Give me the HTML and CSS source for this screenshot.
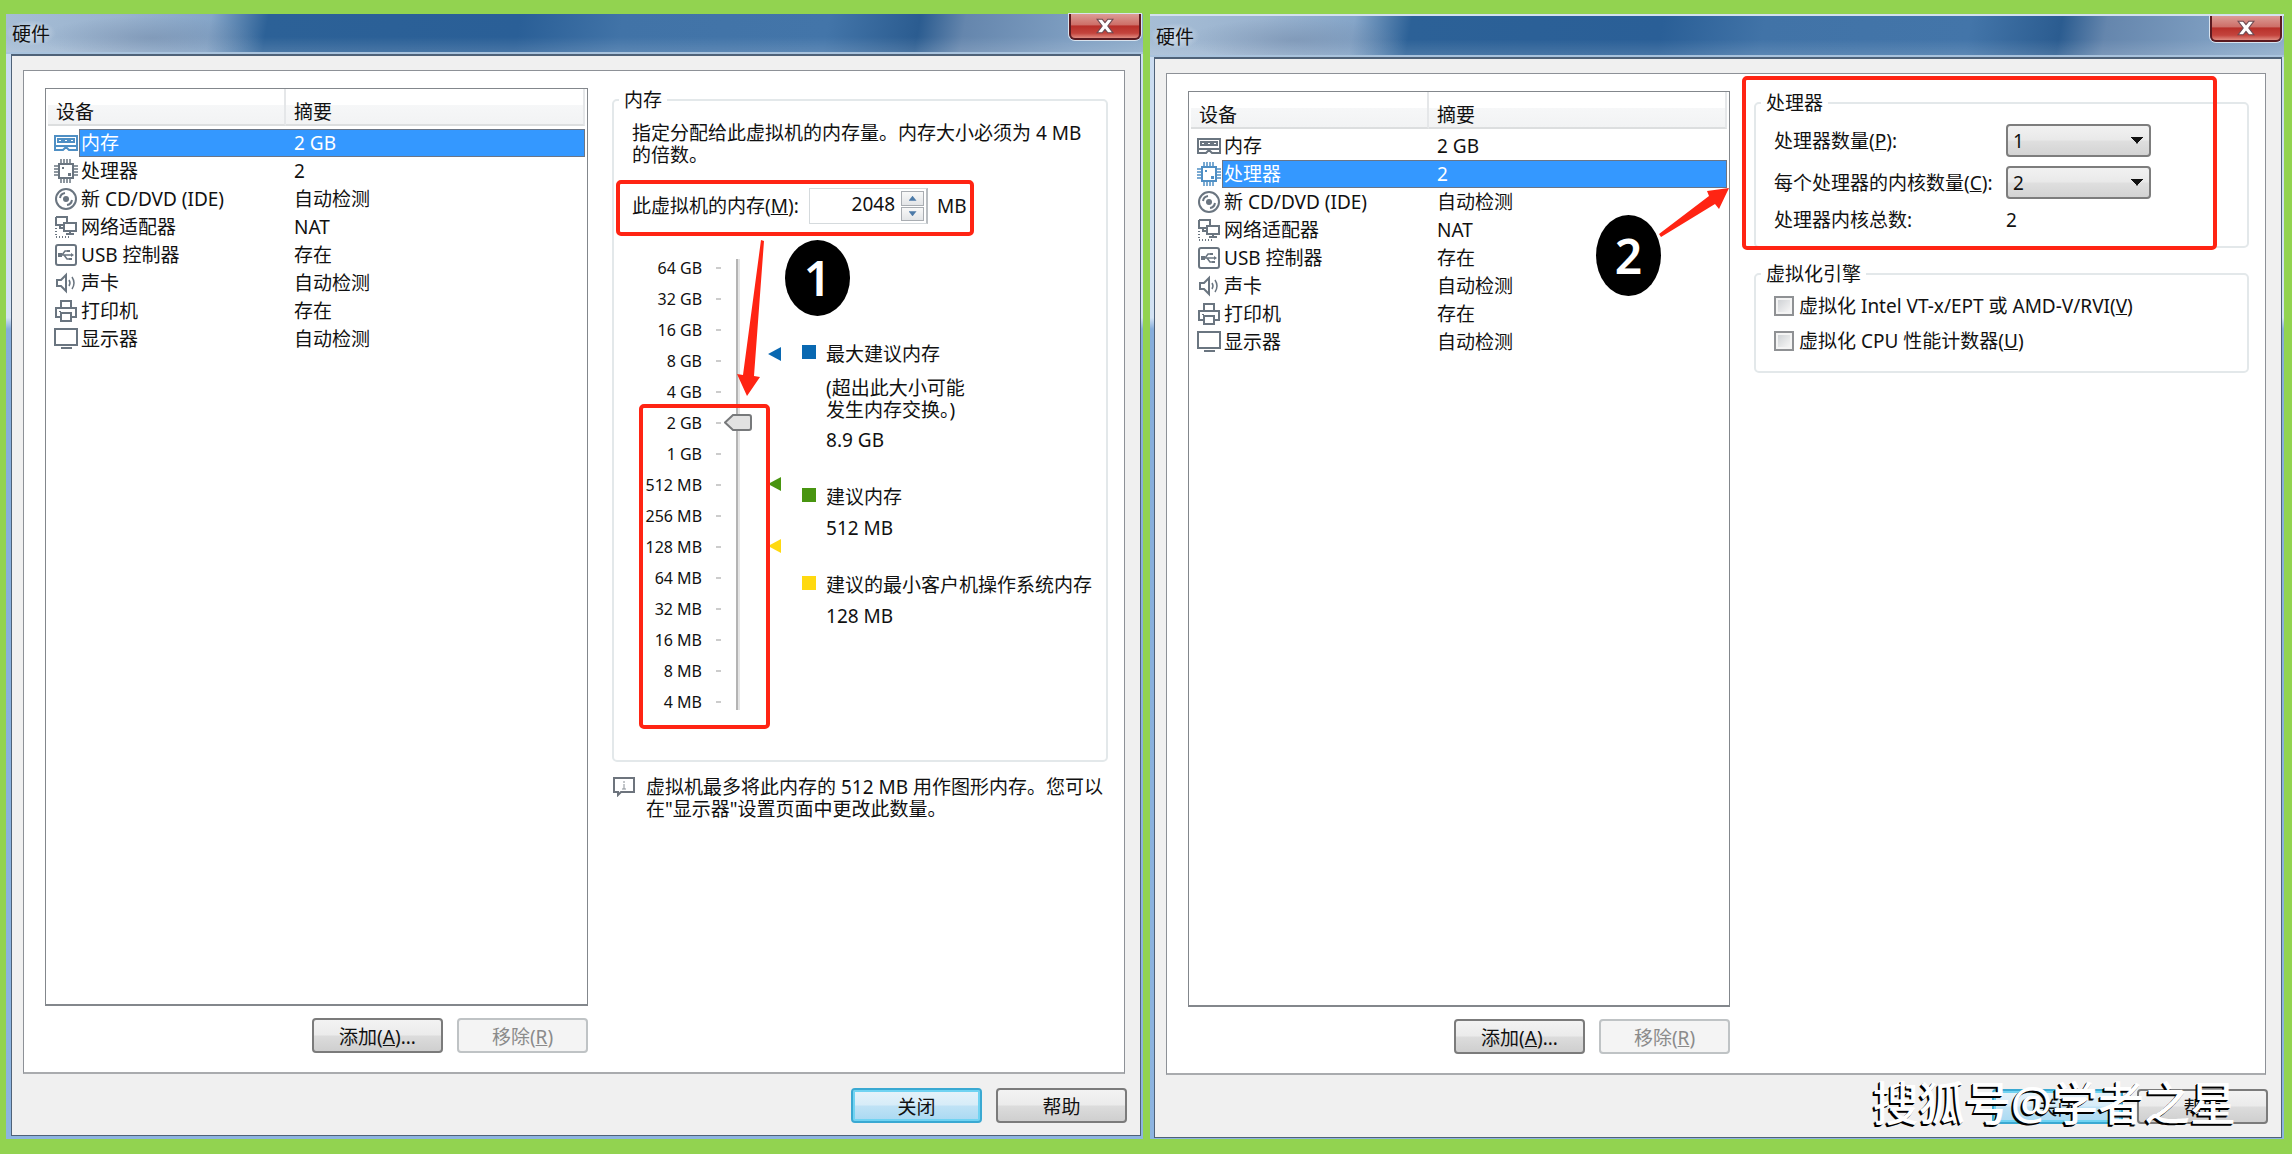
FILE: index.html
```html
<!DOCTYPE html>
<html lang="zh-CN">
<head>
<meta charset="utf-8">
<title>硬件</title>
<link rel="stylesheet" href="styles.css">
</head>
<body>
<svg class="sprite" aria-hidden="true">
  <symbol id="i-mem" viewBox="0 0 24 24"><path class="ln" d="M1 5h22v10H1z"/><path class="ln" d="M4 8h4v3H4zM10 8h4v3h-4zM16 8h4v3h-4z"/><path class="ln" d="M1 15v4h8l2-2h2l2 2h8v-4"/><path class="ln" d="M1 15h22"/></symbol>
  <symbol id="i-cpu" viewBox="0 0 24 24"><path class="ln" d="M5 5h14v14H5z"/><path class="pin" d="M7 0v4M10 0v4M13 0v4M16 0v4M7 20v4M10 20v4M13 20v4M16 20v4M0 7h4M0 10h4M0 13h4M0 16h4M20 7h4M20 10h4M20 13h4M20 16h4"/><path class="sd" d="M8 8h2v2H8zM14 14h3v3h-3z"/></symbol>
  <symbol id="i-disc" viewBox="0 0 24 24"><circle class="ln" cx="12" cy="12" r="10"/><circle class="sd" cx="12" cy="12" r="3"/><path class="ln" d="M6 11a6 6 0 0 1 5-5M18 13a6 6 0 0 1-5 5"/></symbol>
  <symbol id="i-net" viewBox="0 0 24 24"><path class="ln" d="M2 2h11v6M2 2v8h7"/><path class="ln" d="M10 8h12v8H10z"/><path class="ln" d="M16 16v3M12 19h8M6 10v3h4"/><path class="dot" d="M2 13v9h14"/></symbol>
  <symbol id="i-usb" viewBox="0 0 24 24"><rect class="ln" x="2" y="2" width="20" height="20" rx="2"/><path class="thin" d="M5 12h13M8 12l3-4h3M10 12l3 4h3"/><path class="sd" d="M4 10h4v4H4zM17 10l3 2-3 2zM13 7h3v2h-3zM15 15h3v2h-3z"/></symbol>
  <symbol id="i-snd" viewBox="0 0 24 24"><path class="ln" d="M3 9h4l5-5v16l-5-5H3z"/><path class="thin" d="M15 9q2 3 0 6M18 6q4 6 0 12"/></symbol>
  <symbol id="i-prn" viewBox="0 0 24 24"><path class="ln" d="M7 9V2h10v7M6 18H2V9h20v9h-4"/><path class="ln" d="M7 14h10v8H7z"/><path class="sd" d="M5 12h2v1H5z"/></symbol>
  <symbol id="i-mon" viewBox="0 0 24 24"><path class="ln" d="M1 2h22v16H1z"/><path class="ln" d="M7 21h11"/></symbol>
  <symbol id="i-x" viewBox="0 0 16 14"><path d="M1 1h4.500l2.500 3 2.500-3H15l-4.500 6L15 13h-4.500L8 10l-2.500 3H1l4.500-6z" fill="#fff" stroke="#6d4a52"/></symbol>
</svg>

<main class="desk">
  <section class="win">
    <header class="title"><h1>硬件</h1><button class="close" aria-label="关闭窗口"><svg><use href="#i-x"/></svg></button></header>
    <div class="client">
      <div class="panel">
        <div class="devices">
          <div class="list">
            <table>
              <colgroup><col class="c-icon"><col class="c-name"><col></colgroup>
              <thead><tr><th colspan="2">设备</th><th>摘要</th></tr></thead>
              <tbody>
                <tr class="sel"><td><svg><use href="#i-mem"/></svg></td><td>内存</td><td>2 GB</td></tr>
                <tr><td><svg><use href="#i-cpu"/></svg></td><td>处理器</td><td>2</td></tr>
                <tr><td><svg><use href="#i-disc"/></svg></td><td>新 CD/DVD (IDE)</td><td>自动检测</td></tr>
                <tr><td><svg><use href="#i-net"/></svg></td><td>网络适配器</td><td>NAT</td></tr>
                <tr><td><svg><use href="#i-usb"/></svg></td><td>USB 控制器</td><td>存在</td></tr>
                <tr><td><svg><use href="#i-snd"/></svg></td><td>声卡</td><td>自动检测</td></tr>
                <tr><td><svg><use href="#i-prn"/></svg></td><td>打印机</td><td>存在</td></tr>
                <tr><td><svg><use href="#i-mon"/></svg></td><td>显示器</td><td>自动检测</td></tr>
              </tbody>
            </table>
          </div>
          <div class="buttons"><button class="btn">添加(<u>A</u>)...</button><button class="btn" disabled>移除(<u>R</u>)</button></div>
        </div>
        <div class="settings">
          <fieldset class="memory">
            <legend>内存</legend>
            <p>指定分配给此虚拟机的内存量。内存大小必须为 4 MB<br>的倍数。</p>
            <div class="size">
              <label for="mem">此虚拟机的内存(<u>M</u>):</label>
              <span class="spin"><input id="mem" type="text" value="2048"><span class="arrows"><button aria-label="增加"><i class="up"></i></button><button aria-label="减少"><i class="down"></i></button></span></span>
              <span>MB</span>
              <span class="mark mark-size"></span>
            </div>
            <div class="chart">
              <ul class="scale">
                <li>64 GB</li><li>32 GB</li><li>16 GB</li><li>8 GB</li><li>4 GB</li><li>2 GB</li><li>1 GB</li><li>512 MB</li><li>256 MB</li><li>128 MB</li><li>64 MB</li><li>32 MB</li><li>16 MB</li><li>8 MB</li><li>4 MB</li>
              </ul>
              <input class="slider" type="range" min="0" max="14" value="9" aria-label="内存">
              <div class="flags"><i class="flag blue"></i><i class="flag green"></i><i class="flag yellow"></i></div>
              <div class="legend">
                <div class="key blue"><strong>最大建议内存</strong><p>(超出此大小可能<br>发生内存交换。)</p><span>8.9 GB</span></div>
                <div class="key green"><strong>建议内存</strong><span>512 MB</span></div>
                <div class="key yellow"><strong>建议的最小客户机操作系统内存</strong><span>128 MB</span></div>
              </div>
              <span class="mark mark-scale"></span>
              <svg class="arrow arrow-one" viewBox="0 0 40 160"><path d="M29 0L32 1 22 136 28 137 15 156 5 134 11 135z" fill="#ff2413"/></svg>
              <span class="badge badge-one">1</span>
            </div>
          </fieldset>
          <div class="note">
            <svg viewBox="0 0 22 20"><path d="M1 1h20v14H8l-3 3v-3H1z" fill="#fff" stroke="#6d747d" stroke-width="2"/><path d="M11 4v2M11 7v5M9 12h4" fill="none" stroke="#8a9097"/></svg>
            <p>虚拟机最多将此内存的 512 MB 用作图形内存。您可以<br>在"显示器"设置页面中更改此数量。</p>
          </div>
        </div>
      </div>
      <footer class="buttons"><button class="btn default">关闭</button><button class="btn">帮助</button></footer>
    </div>
  </section>

  <section class="win second">
    <header class="title"><h1>硬件</h1><button class="close" aria-label="关闭窗口"><svg><use href="#i-x"/></svg></button></header>
    <div class="client">
      <div class="panel">
        <div class="devices">
          <div class="list">
            <table>
              <colgroup><col class="c-icon"><col class="c-name"><col></colgroup>
              <thead><tr><th colspan="2">设备</th><th>摘要</th></tr></thead>
              <tbody>
                <tr><td><svg><use href="#i-mem"/></svg></td><td>内存</td><td>2 GB</td></tr>
                <tr class="sel"><td><svg><use href="#i-cpu"/></svg></td><td>处理器</td><td>2</td></tr>
                <tr><td><svg><use href="#i-disc"/></svg></td><td>新 CD/DVD (IDE)</td><td>自动检测</td></tr>
                <tr><td><svg><use href="#i-net"/></svg></td><td>网络适配器</td><td>NAT</td></tr>
                <tr><td><svg><use href="#i-usb"/></svg></td><td>USB 控制器</td><td>存在</td></tr>
                <tr><td><svg><use href="#i-snd"/></svg></td><td>声卡</td><td>自动检测</td></tr>
                <tr><td><svg><use href="#i-prn"/></svg></td><td>打印机</td><td>存在</td></tr>
                <tr><td><svg><use href="#i-mon"/></svg></td><td>显示器</td><td>自动检测</td></tr>
              </tbody>
            </table>
            <svg class="arrow arrow-two" viewBox="0 0 72 60"><path d="M0 46L50 8 48 3 70 0 60 21 56 16 2 49z" fill="#ff2413"/></svg>
            <span class="badge badge-two">2</span>
          </div>
          <div class="buttons"><button class="btn">添加(<u>A</u>)...</button><button class="btn" disabled>移除(<u>R</u>)</button></div>
        </div>
        <div class="settings">
          <div class="marked">
            <fieldset class="cpu">
              <legend>处理器</legend>
              <label for="count">处理器数量(<u>P</u>):</label><select id="count"><option>1</option><option>2</option></select>
              <label for="cores">每个处理器的内核数量(<u>C</u>):</label><select id="cores"><option>2</option><option>1</option></select>
              <span>处理器内核总数:</span><output>2</output>
            </fieldset>
            <span class="mark mark-cpu"></span>
          </div>
          <fieldset class="engine">
            <legend>虚拟化引擎</legend>
            <label><input type="checkbox"><span>虚拟化 Intel VT-x/EPT 或 AMD-V/RVI(<u>V</u>)</span></label>
            <label><input type="checkbox"><span>虚拟化 CPU 性能计数器(<u>U</u>)</span></label>
          </fieldset>
        </div>
      </div>
      <footer class="buttons"><button class="btn default">关闭</button><button class="btn">帮助</button></footer>
    </div>
    <span class="watermark">搜狐号@学者之星</span>
  </section>
</main>
</body>
</html>
```
FILE: styles.css
```css
* { box-sizing: border-box; }
body, button, input, select {
  font: 19px/24px "Noto Sans", "Noto Sans CJK SC", sans-serif;
  color: #111;
}
body { margin: 0; background: #92d350; }
p, h1, ul { margin: 0; padding: 0; font-size: 19px; font-weight: 400; }
button { padding: 0; }
.sprite { position: absolute; width: 0; height: 0; }

.desk {
  display: grid;
  grid-template-columns: 1137fr 1134fr;
  gap: 7px;
  min-height: 100vh;
  padding: 14px 8px 15px 6px;
}

/* window frame */
.win {
  position: relative;
  display: flex;
  flex-direction: column;
  padding: 0 2px 3px 5px;
  background: linear-gradient(#c9dbf0, #d3e2f3 27%, #86addb 28%, #8db4e0);
}
.second { padding: 0 2px 1px 4px; }
.title {
  display: flex;
  justify-content: space-between;
  height: 40px;
  margin: 0 -2px 0 -5px;
  padding: 0 2px 0 0;
  border-bottom: 2px solid #a9c3dd;
  background:
    radial-gradient(ellipse 110px 22px at 145px 24px, #7188a780, #7188a700),
    linear-gradient(#ffffff00 60%, #ffffff22),
    linear-gradient(100deg, #a6bdd5 0, #9ab3cf 10%, #85a5c8 18%, #2c6197 23%, #2a5f97 45%, #4173a7 54%, #4375a9 72%, #2b5c90 80%, #6586ad 84%, #7f9fc2 94%, #8caac9);
}
.second .title { height: 43px; margin-left: -4px; border-top: 2px solid #d3e0ee; }
.title h1 {
  align-self: center;
  padding: 2px 6px 0;
  background: radial-gradient(closest-side, #ffffff90, #ffffff00);
}
.close {
  width: 72px;
  height: 26px;
  border: 2px solid #5b1a20;
  border-top: 0;
  border-radius: 0 0 6px 6px;
  background: linear-gradient(#dc9c96, #cd6f68 45%, #b8302a 50%, #c4443d 80%, #e08a80);
  box-shadow: 0 0 0 1px #d9e3ee;
}
.close svg { display: block; width: 18px; height: 16px; margin: 0 auto; }
.client {
  flex: 1;
  display: flex;
  flex-direction: column;
  padding: 14px 15px 12px 11px;
  border: 1px solid #4f6278;
  border-top-width: 2px;
  background: #f0f0f0;
}
.second .client { padding-bottom: 13px; }
.panel {
  flex: 1;
  display: grid;
  grid-template-columns: 542fr 495fr;
  gap: 24px;
  padding: 17px 16px 19px 21px;
  border: 1px solid #8d9197;
  border-bottom: 2px solid #a9abae;
  background: #fff;
}

/* buttons */
.buttons { display: flex; justify-content: flex-end; gap: 14px; }
.devices .buttons { margin-top: 12px; }
footer { margin-top: 14px; }
footer.buttons { margin-right: -2px; }
.btn {
  width: 131px;
  height: 35px;
  padding-top: 2px;
  border: 2px solid #7b7b7b;
  border-radius: 4px;
  background: linear-gradient(#f3f3f3, #ebebeb 48%, #dcdcdc 52%, #cfcfcf);
}
.btn:disabled { color: #8b8b8b; border-color: #bfc3c5; background: #f4f4f4; }
.btn.default {
  border-color: #3aa9d2;
  background: linear-gradient(#e6f3fa, #d7ecf8 48%, #bfe2f5 52%, #a9d9f2);
  box-shadow: inset 0 0 0 2px #70d3f2;
}

/* device list */
.devices { display: flex; flex-direction: column; }
.list {
  position: relative;
  flex: 1;
  padding: 0 2px;
  border: 1px solid #83878c;
  border-bottom-width: 2px;
}
table { width: 100%; table-layout: fixed; border-spacing: 0; }
.c-icon { width: 31px; }
.c-name { width: 207px; }
th {
  height: 37px;
  padding: 10px 0 0 8px;
  font-weight: 400;
  text-align: left;
  line-height: 24px;
  background: linear-gradient(#fff 45%, #f6f7f8 46%, #f2f3f4);
  border-right: 2px solid #e5e7e9;
  border-bottom: 2px solid #dcdedf;
}
tbody::before { content: ""; display: block; height: 3px; }
td { height: 28px; padding: 0 0 0 2px; white-space: nowrap; line-height: 26px; }
td:first-child { padding-left: 6px; color: #6a7580; }
td:last-child { padding-left: 8px; }
td svg { display: block; width: 24px; height: 24px; }
.sel td { color: #fff; }
.sel td:first-child { color: #4f8fc4; }
.sel td + td {
  background: #3498ff;
  border-top: 1px solid #6b7687;
  border-bottom: 1px solid #6b7687;
  line-height: 24px;
}
.sel td:nth-child(2) { border-left: 1px solid #6b7687; padding-left: 1px; }
.sel td:last-child { border-right: 1px solid #6b7687; }
.ln { fill: none; stroke: currentColor; stroke-width: 2; }
.pin, .thin { fill: none; stroke: currentColor; stroke-width: 1.500; }
.dot { fill: none; stroke: currentColor; stroke-width: 2; stroke-dasharray: 1 2; }
.sd { fill: currentColor; }

/* settings */
fieldset {
  min-width: 0;
  margin: 0;
  border: 2px solid #e3e8ea;
  border-radius: 5px;
  white-space: nowrap;
}
legend { height: 24px; margin-left: -13px; padding: 0 5px; }
.memory { padding: 10px 10px 43px 18px; }
.memory p, .note p { line-height: 22px; }
.size { position: relative; display: flex; align-items: center; height: 36px; margin-top: 22px; }
.size label { width: 177px; }
.spin {
  display: flex;
  width: 119px;
  height: 36px;
  margin-right: 9px;
  padding: 2px;
  border: 1px solid #d5dadd;
  border-right: 2px solid #b9bdc1;
  background: #fff;
}
.spin input { flex: 1; min-width: 0; padding: 0 6px 4px; border: 0; outline: 0; background: none; text-align: right; }
.arrows { display: flex; flex-direction: column; gap: 1px; width: 23px; }
.arrows button {
  flex: 1;
  display: grid;
  place-items: center;
  border: 1px solid #a9adb2;
  background: linear-gradient(#f8f8f8, #e3e5e7);
}
.up, .down { width: 8px; height: 5px; background: #4c7aa8; clip-path: polygon(50% 0, 100% 100%, 0 100%); }
.down { clip-path: polygon(0 0, 100% 0, 50% 100%); }

.chart { position: relative; display: flex; margin-top: 28px; }
.scale { width: 89px; list-style: none; }
.scale li {
  display: flex;
  justify-content: flex-end;
  align-items: center;
  gap: 14px;
  height: 31px;
  font-size: 16px;
}
.scale li::after { content: ""; width: 5px; height: 2px; background: #ccc; }
.slider {
  appearance: none;
  writing-mode: vertical-lr;
  direction: rtl;
  width: 28px;
  height: 451px;
  margin: 7px 16px 0 3px;
  background: linear-gradient(90deg, #b4b4b4 2px, #e4e4e4 2px) center / 4px 100% no-repeat;
}
.slider::-webkit-slider-thumb {
  appearance: none;
  width: 28px;
  height: 17px;
  background: url("data:image/svg+xml,%3Csvg xmlns='http://www.w3.org/2000/svg' viewBox='0 0 28 17'%3E%3Cpath d='M1 8.500L9 1h16q2 0 2 2v11q0 2-2 2H9z' fill='%23e2e2e2' stroke='%2377797b' stroke-width='2'/%3E%3C/svg%3E") center / 28px 17px no-repeat;
}
.flags { position: relative; width: 13px; margin-right: 21px; }
.flag { position: absolute; left: 0; width: 13px; height: 14px; background: var(--c); clip-path: polygon(0 50%, 100% 0, 100% 100%); }
.flag.blue { top: 95px; }
.flag.green { top: 225px; }
.flag.yellow { top: 287px; }
.blue { --c: #0968b1; }
.green { --c: #489510; }
.yellow { --c: #ffd90f; }
.legend { display: flex; flex-direction: column; gap: 33px; padding-top: 90px; }
.key { display: grid; grid-template-columns: 14px 1fr; column-gap: 10px; row-gap: 7px; }
.key::before { content: ""; height: 14px; margin-top: 3px; background: var(--c); }
.key strong { font-weight: 400; }
.key p, .key span { grid-column: 2; }
.key p { margin: 4px 0 0 0; }
.note { display: flex; gap: 11px; margin-top: 14px; padding-left: 1px; white-space: nowrap; }
.note svg { width: 22px; height: 20px; margin-top: 1px; }

.marked { position: relative; }
.cpu {
  display: grid;
  grid-template-columns: 232px 145px;
  gap: 9px 0;
  align-items: center;
  padding: 9px 0 14px 18px;
}
select {
  appearance: none;
  height: 33px;
  padding: 0 5px;
  border: 2px solid #7d7d7d;
  border-radius: 4px;
  background:
    linear-gradient(to bottom left, #111 50%, #0000 51%) right 12px center / 6px 7px no-repeat,
    linear-gradient(to bottom right, #111 50%, #0000 51%) right 6px center / 6px 7px no-repeat,
    linear-gradient(#f1f1f1, #e9e9e9 48%, #dfdfdf 52%, #d3d3d3);
}
#count, #cores {
  background-image:
    linear-gradient(to bottom left, #111 50%, #0000 51%),
    linear-gradient(to bottom right, #111 50%, #0000 51%),
    linear-gradient(#f1f1f1, #e9e9e9 48%, #dfdfdf 52%, #d3d3d3);
}
.engine { display: grid; gap: 11px; margin-top: 14px; padding: 8px 0 18px 18px; }
.engine label { display: flex; align-items: center; gap: 5px; }
input[type="checkbox"] {
  appearance: none;
  width: 20px;
  height: 20px;
  margin: 0;
  border: 2px solid #8f9194;
  background: linear-gradient(135deg, #cfd2d5, #f6f6f6) content-box, #f4f4f4;
  padding: 2px;
}

/* annotations drawn over the windows */
.mark { position: absolute; border: 4px solid #ff2413; border-radius: 5px; pointer-events: none; }
.mark-size { left: -16px; top: -8px; width: 358px; height: 56px; }
.mark-scale { left: 7px; top: 152px; width: 131px; height: 325px; }
.mark-cpu { left: -12px; top: -15px; width: 475px; height: 174px; }
.arrow { position: absolute; }
.arrow-one { left: 100px; top: -12px; width: 40px; height: 160px; }
.arrow-two { left: 470px; top: 96px; width: 72px; height: 60px; }
.badge {
  position: absolute;
  display: grid;
  place-items: center;
  width: 65px;
  border-radius: 50%;
  background: #000;
  color: #fff;
  font-size: 48px;
  font-weight: 600;
}
.badge-one { left: 153px; top: -12px; height: 76px; }
.badge-two { left: 407px; top: 123px; height: 81px; }
.watermark {
  position: absolute;
  right: 48px;
  bottom: 13px;
  font-size: 46px;
  font-weight: 500;
  line-height: 48px;
  color: #fff;
  text-shadow: -2px 2px 0 #000, -1px 1px 0 #000;
  white-space: nowrap;
}
```
